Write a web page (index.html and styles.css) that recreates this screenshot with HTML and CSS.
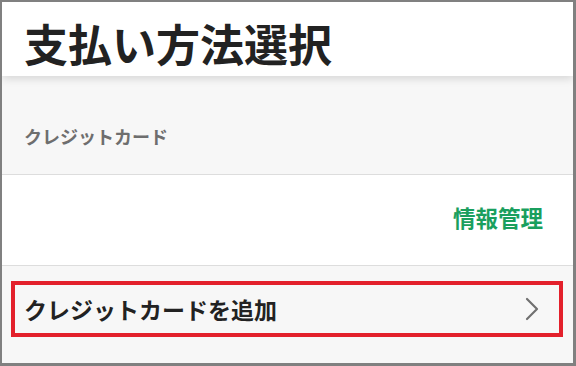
FILE: index.html
```html
<!DOCTYPE html>
<html lang="ja">
<head>
    <meta charset="UTF-8">
    <meta name="viewport" content="width=device-width, initial-scale=1.0">
    <title>支払い方法選択</title>
    <link rel="stylesheet" href="styles.css">
</head>
<body>
    <div class="frame">
        <div class="header">
            <h1>支払い方法選択</h1>
        </div>

        <div class="section-label">
            <p>クレジットカード</p>
        </div>

        <div class="manage-row">
            <a class="manage-link">情報管理</a>
        </div>

        <div class="add-section">
            <div class="add-row">
                <span class="add-text">クレジットカードを追加</span>
                <svg class="chevron" width="14" height="24" viewBox="0 0 14 24">
                    <polyline points="2,2 12,12 2,22" fill="none" stroke="#707070" stroke-width="2.2" stroke-linecap="round" stroke-linejoin="round"/>
                </svg>
            </div>
        </div>
    </div>
</body>
</html>
```

FILE: styles.css
```css
* {
    box-sizing: border-box;
    margin: 0;
    padding: 0;
}

body {
    font-family: "Noto Sans CJK JP", "Noto Sans", sans-serif;
    background: #fff;
    color: #222;
}

.frame {
    width: 576px;
    height: 366px;
    border-style: solid;
    border-color: #808080;
    border-width: 2px 3px 3px 2px;
    background: #f7f7f7;
    overflow: hidden;
}

.header {
    position: relative;
    z-index: 1;
    height: 74px;
    padding: 19px 22px 0;
    background: #fff;
    box-shadow: 0 3px 8px rgba(0, 0, 0, 0.13);
}

.header h1 {
    font-size: 44px;
    line-height: 44px;
    font-weight: 700;
    color: #222;
}

.section-label {
    height: 99px;
    padding: 51px 22px 0;
    border-bottom: 1px solid #ddd;
}

.section-label p {
    font-size: 18px;
    line-height: 18px;
    font-weight: 700;
    color: #6e6e6e;
}

.manage-row {
    height: 91px;
    padding: 31px 30px 0;
    background: #fff;
    border-bottom: 1px solid #ddd;
    text-align: right;
}

.manage-link {
    font-size: 22.5px;
    line-height: 22px;
    font-weight: 700;
    color: #1a9f5e;
}

.add-section {
    padding: 15px 10px 26px 9px;
}

.add-row {
    display: flex;
    align-items: center;
    justify-content: space-between;
    height: 56px;
    padding: 0 20px 0 9px;
    border: 4px solid #e3202b;
}

.add-text {
    font-size: 23px;
    line-height: 24px;
    font-weight: 700;
    color: #222;
}

.chevron {
    display: block;
}
```
